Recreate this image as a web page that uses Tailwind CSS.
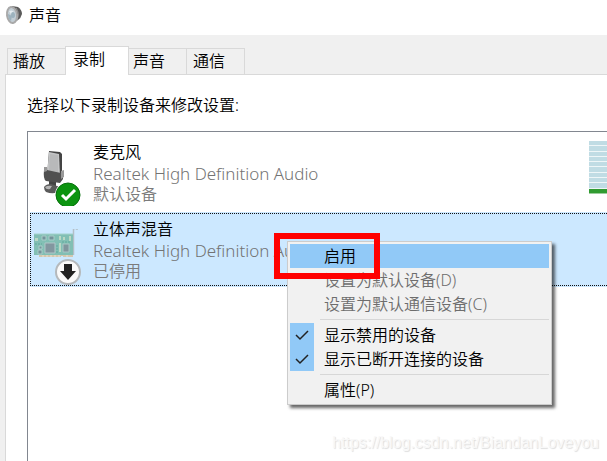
<!DOCTYPE html>
<html lang="zh-CN">
<head>
    <meta charset="UTF-8">
    <meta name="viewport" content="width=device-width, initial-scale=1.0">
    <title>声音</title>
    <script src="https://cdn.jsdelivr.net/npm/@tailwindcss/browser@4"></script>
</head>
<body class="bg-[#f0f0f0] text-black text-[16px] leading-[21px] font-[350] font-['Noto_Sans','Noto_Sans_CJK_SC',sans-serif]">
    <div class="relative flex flex-col min-h-screen overflow-hidden">
        <!-- title bar -->
        <header class="flex items-center gap-[7px] h-[35px] pl-[5px] pb-[5px] bg-white">
            <svg class="w-[17px] h-5" viewBox="0 0 17 20" aria-hidden="true">
                <path d="M7 1 L13 2 Q17 5 17 9 Q16 13 13 15 L7 19Z" fill="#5b5b5b"/>
                <path d="M11 3 Q15 8 12 15" stroke="#999" fill="none"/>
                <ellipse cx="7" cy="10" rx="5" ry="8" fill="#c3ced5" stroke="#a9a9a9" stroke-width="2" transform="rotate(-8 7 10)"/>
                <path d="M4 6 Q8 4 10 9 L7 11Z" fill="#e6edf0"/>
                <path d="M3 9 L7 11 L6 16 Q3 14 3 9Z" fill="#9eb2bd"/>
                <ellipse cx="8" cy="10" rx="2" ry="3" fill="#9db3be"/>
            </svg>
            <h1>声音</h1>
        </header>

        <!-- tabs -->
        <nav class="flex items-end h-[39px] pl-[7px]" role="tablist">
            <button role="tab" class="w-[58px] h-[26px] pl-[5px] text-left border-t border-l border-[#d9d9d9]">播放</button>
            <button role="tab" aria-selected="true" class="relative z-10 w-16 h-[29px] -mb-px pl-[7px] pb-1 text-left bg-white border-t border-x border-[#d9d9d9]">录制</button>
            <button role="tab" class="w-[57px] h-[26px] pl-1 text-left border-t border-[#d9d9d9]">声音</button>
            <button role="tab" class="w-[59px] h-[26px] pl-1.5 text-left border-t border-x border-[#d9d9d9]">通信</button>
        </nav>

        <main class="flex flex-col flex-1 ml-[5px] pl-[21px] pt-5 bg-white border-t border-l border-[#d9d9d9]">
            <p>选择以下录制设备来修改设置:</p>

            <!-- device list -->
            <ul class="flex-1 mt-[15px] pl-0.5 border-t border-l border-[#828790]">
                <li class="flex h-20 pt-2.5 pl-1">
                    <svg class="w-[52px] h-[60px] shrink-0 mt-1" viewBox="0 0 52 60" aria-hidden="true">
                        <path d="M15 34h7v8h-7z" fill="#444"/>
                        <path d="M10 41 Q12 38 17 38 L26 41 V45 Q20 49 12 46 Q10 44 10 41Z" fill="#5a5a5a"/>
                        <path d="M11 41 Q14 39 18 40 L16 43 Q12 44 11 41Z" fill="#b5b5b5"/>
                        <path d="M15 5 L26 6 L28 8 V32 L13 30Z" fill="#444"/>
                        <path d="M15 6 L25 8 L26 30 L13 29Z" fill="#c4c5c6"/>
                        <path d="M16 8 L24 9 V26 L15 25Z" fill="#b8b9ba"/>
                        <path d="M10 24 L13 24 L27 27 L29 25 V33 L26 37 L12 35 Q9 33 10 24Z" fill="#505050"/>
                        <path d="M10 21 L13 21 V25 L10 26Z M27 25 L30 24 V31 L27 33Z" fill="#999"/>
                        <circle cx="34" cy="49" r="13" fill="#fff"/>
                        <circle cx="34" cy="49" r="12" fill="#0c9410" stroke="#08700d"/>
                        <path d="M28 49 L32 53 L41 44" fill="none" stroke="#fff" stroke-width="3"/>
                    </svg>
                    <div class="ml-[7px] flex-1">
                        <p>麦克风</p>
                        <p class="text-[17px] text-[#737373]">Realtek High Definition Audio</p>
                        <p class="text-[#7b7b7b]">默认设备</p>
                    </div>
                    <!-- level meter -->
                    <div class="flex flex-col w-[18px] h-[53px] -mt-px" role="meter" aria-label="麦克风" aria-valuemin="0" aria-valuemax="10" aria-valuenow="1">
                        <div class="flex-1 bg-[#c0dce4] border-b border-[#eef6f8]"></div>
                        <div class="flex-1 bg-[#c0dce4] border-b border-[#eef6f8]"></div>
                        <div class="flex-1 bg-[#c0dce4] border-b border-[#eef6f8]"></div>
                        <div class="flex-1 bg-[#c0dce4] border-b border-[#eef6f8]"></div>
                        <div class="flex-1 bg-[#c0dce4] border-b border-[#eef6f8]"></div>
                        <div class="flex-1 bg-[#c0dce4] border-b border-[#eef6f8]"></div>
                        <div class="flex-1 bg-[#c0dce4] border-b border-[#eef6f8]"></div>
                        <div class="flex-1 bg-[#c0dce4] border-b border-[#eef6f8]"></div>
                        <div class="flex-1 bg-[#c0dce4] border-b border-[#eef6f8]"></div>
                        <div class="flex-1 bg-[#319b31] border-b border-[#9ccd9c]"></div>
                    </div>
                </li>
                <li class="relative flex h-[75px] pt-[7px] pl-1 bg-[#cce8ff]" aria-selected="true">
                    <!-- focus rectangle, one dot every two pixels -->
                    <svg class="absolute inset-y-px left-0 w-full h-[73px]" aria-hidden="true" shape-rendering="crispEdges">
                        <path d="M0 .5H2000 M0 72.500H2000 M.5 0V73" fill="none" stroke="#111" stroke-dasharray="1 1"/>
                    </svg>
                    <svg class="w-[52px] h-14 shrink-0 mt-2.5" viewBox="0 0 52 56" aria-hidden="true">
                        <path d="M43 1 V-1 M43 -.5 H39.500 V26" fill="none" stroke="#b3bec6" stroke-width="1.500"/>
                        <path d="M2 24h37v4h-10v-1h-2v1H5v-3H2z" fill="#d3c7ae"/>
                        <path d="M9 25v3 M13 25v3 M17 25v3 M21 25v3 M25 25v3 M33 25v3" stroke="#e9e1cf"/>
                        <path d="M-1 5H39V26H0z" fill="#82bfb4"/>
                        <path d="M0 5H39" stroke="#a5d3cc"/>
                        <path d="M11 14h10v10H11z" fill="#82979f" stroke="#b0c6c8"/>
                        <path d="M29 15h6v8h-6z" fill="#80969d" stroke="#a9c5c5"/>
                        <path d="M8 7h4v4H8z M15 7h5v4h-5z M5 17h3v3H5z M4 21h4v4H4z" fill="#74939a" stroke="#a9ccc8"/>
                        <path d="M1 9h3v3H1z M25 14h2v9h-2z M25 7h2v4h-2z M29 8h2v3h-2z M35 7h2v5h-2z" fill="#bbd8c4"/>
                        <path d="M1 15h7 M28 13h9 M23 16v8" stroke="#61a99b" stroke-dasharray="2 1"/>
                        <circle cx="34" cy="43" r="12" fill="#fafafa" stroke="#b5b9bc" stroke-width="2"/>
                        <path d="M30 35 H38 V42 H42 L34 51 L26 42 H30Z" fill="#222"/>
                    </svg>
                    <div class="ml-[7px]">
                        <p>立体声混音</p>
                        <p class="text-[17px] text-[#737373]">Realtek High Definition Audio</p>
                        <p class="text-[#7b7b7b]">已停用</p>
                    </div>
                </li>
            </ul>
        </main>

        <!-- context menu -->
        <div class="absolute z-20 left-[287px] top-[241px] w-[265px] flex flex-col p-0.5 bg-[#f1f1f1] border border-[#ccc] shadow-[3px_3px_3px_#0009]" role="menu">
            <button role="menuitem" class="h-6 pl-[34px] text-left bg-[#91c9f7]">启用</button>
            <button role="menuitem" disabled class="h-6 pl-[34px] text-left text-[#6d6d6d]">设置为默认设备(D)</button>
            <button role="menuitem" disabled class="h-6 pl-[34px] text-left text-[#6d6d6d]">设置为默认通信设备(C)</button>
            <hr class="ml-[30px] my-[3px] border-[#d7d7d7]">
            <label class="flex items-center h-6">
                <span class="grid w-6 h-6 mr-2.5">
                    <input type="checkbox" checked class="col-start-1 row-start-1 appearance-none bg-[#91c9f7]">
                    <svg class="col-start-1 row-start-1 w-6 h-6 pointer-events-none" viewBox="0 0 24 24"><path d="M6 12 L10 16 L18 8" fill="none" stroke="#222" stroke-width="1.500"/></svg>
                </span>
                显示禁用的设备
            </label>
            <label class="flex items-center h-6">
                <span class="grid w-6 h-6 mr-2.5">
                    <input type="checkbox" checked class="col-start-1 row-start-1 appearance-none bg-[#91c9f7]">
                    <svg class="col-start-1 row-start-1 w-6 h-6 pointer-events-none" viewBox="0 0 24 24"><path d="M6 12 L10 16 L18 8" fill="none" stroke="#222" stroke-width="1.500"/></svg>
                </span>
                显示已断开连接的设备
            </label>
            <hr class="ml-[30px] my-[3px] border-[#d7d7d7]">
            <button role="menuitem" class="h-6 pl-[34px] text-left">属性(P)</button>
        </div>

        <!-- red highlight around the first menu item -->
        <div class="absolute z-30 left-[274px] top-[233px] w-[106px] h-[46px] border-6 border-[#f00] pointer-events-none"></div>

        <p class="absolute right-2 bottom-2 font-normal font-['Liberation_Sans',sans-serif] text-[#f8f8f8] [text-shadow:1px_1px_1px_#ddd]">https://blog.csdn.net/BiandanLoveyou</p>
    </div>
</body>
</html>
